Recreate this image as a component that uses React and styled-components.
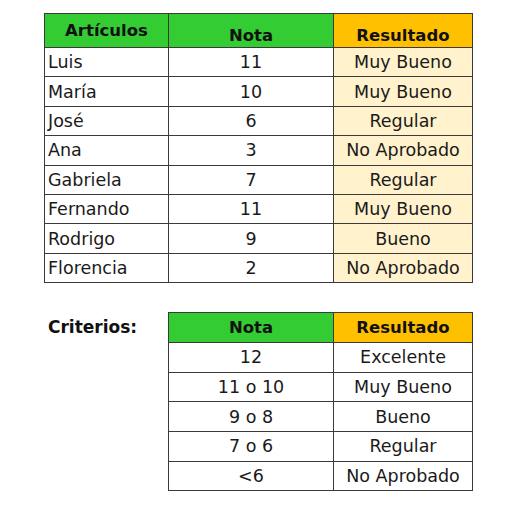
import React from 'react';
import styled, { createGlobalStyle } from 'styled-components';

const GlobalStyle = createGlobalStyle`
    body {
        margin: 0;
        background: #ffffff;
        font-family: 'DejaVu Sans', 'Noto Sans', sans-serif;
        color: #1a1a1a;
    }
`

const Page = styled.div`
    width: 518px;
    height: 512px;
    padding: 13px 0 0 44px;
    box-sizing: border-box;
    display: flex;
    flex-direction: column;
    gap: 29px;
`

const Table = styled.table`
    width: ${p => p.$w}px;
    border-collapse: collapse;
    table-layout: fixed;
    font-size: 17.5px;
    border: 1.5px solid #3a3a3a;
`

const HeadRow = styled.tr`
    height: ${p => p.$h}px;
`

const HeadCell = styled.th`
    padding: ${p => (p.$drop ? `${p.$drop}px` : '0')} 0 0 0;
    vertical-align: ${p => (p.$drop ? 'top' : 'middle')};
    border: 1.5px solid #3a3a3a;
    background: ${p => (p.$tone === 'orange' ? '#ffc000' : '#33cc33')};
    font-weight: bold;
    font-size: 16.5px;
    color: #111;
    width: ${p => p.$w}px;
    line-height: 20px;
`

const Row = styled.tr`
    height: ${p => p.$h}px;
`

const Cell = styled.td`
    padding: 0 ${p => (p.$align === 'left' ? '3px' : '0')};
    border: 1.5px solid #3a3a3a;
    text-align: ${p => p.$align || 'center'};
    background: ${p => (p.$shade ? '#fff2cc' : '#ffffff')};
    vertical-align: middle;
    line-height: 20px;
    white-space: nowrap;
`

const Section = styled.div`
    display: flex;
    align-items: flex-start;
`

const Label = styled.div`
    width: 124px;
    padding: 5px 0 0 4px;
    box-sizing: border-box;
    font-weight: bold;
    font-size: 17px;
    color: #111;
`

const students = [
    ['Luis', '11', 'Muy Bueno'],
    ['María', '10', 'Muy Bueno'],
    ['José', '6', 'Regular'],
    ['Ana', '3', 'No Aprobado'],
    ['Gabriela', '7', 'Regular'],
    ['Fernando', '11', 'Muy Bueno'],
    ['Rodrigo', '9', 'Bueno'],
    ['Florencia', '2', 'No Aprobado'],
]

const criteria = [
    ['12', 'Excelente'],
    ['11 o 10', 'Muy Bueno'],
    ['9 o 8', 'Bueno'],
    ['7 o 6', 'Regular'],
    ['<6', 'No Aprobado'],
]

const App = () => (
    <Page>
        <GlobalStyle />
        <Table $w={425}>
            <thead>
                <HeadRow $h={34}>
                    <HeadCell $w={123} $drop={7}>Artículos</HeadCell>
                    <HeadCell $w={164} $drop={12}>Nota</HeadCell>
                    <HeadCell $w={138} $drop={12} $tone="orange">Resultado</HeadCell>
                </HeadRow>
            </thead>
            <tbody>
                {students.map(([name, grade, result]) => (
                    <Row key={name} $h={29.4}>
                        <Cell $align="left">{name}</Cell>
                        <Cell>{grade}</Cell>
                        <Cell $shade>{result}</Cell>
                    </Row>
                ))}
            </tbody>
        </Table>
        <Section>
            <Label>Criterios:</Label>
            <Table $w={302}>
                <thead>
                    <HeadRow $h={30}>
                        <HeadCell $w={164}>Nota</HeadCell>
                        <HeadCell $w={138} $tone="orange">Resultado</HeadCell>
                    </HeadRow>
                </thead>
                <tbody>
                    {criteria.map(([grade, result]) => (
                        <Row key={grade} $h={29.6}>
                            <Cell>{grade}</Cell>
                            <Cell>{result}</Cell>
                        </Row>
                    ))}
                </tbody>
            </Table>
        </Section>
    </Page>
)

export default App;
